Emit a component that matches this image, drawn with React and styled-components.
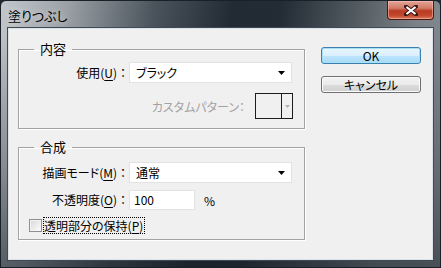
import React from "react";
import styled, { createGlobalStyle } from "styled-components";

const Global = createGlobalStyle`
  html, body { margin: 0; padding: 0; background: #1f2730; }
  body { font-family: "Noto Sans CJK JP", "Noto Sans", sans-serif; }
  * { box-sizing: border-box; }
`;

const Window = styled.div`
  width: 441px;
  height: 268px;
  display: flex;
  flex-direction: column;
  border: 1px solid #1a2027;
  border-radius: 6px 6px 0 0;
  overflow: hidden;
  background:
    linear-gradient(to bottom, rgba(0,0,0,0) 12%, rgba(20,28,36,0.25) 60%, rgba(20,28,36,0.55) 100%),
    linear-gradient(100deg, #c3c7cb 0%, #9aa0a6 14%, #4a535b 32%, #222b34 48%, #232c35 58%, #4e565d 72%, #7b8287 86%, #878d92 100%);
`;

const TitleBar = styled.div`
  height: 27px;
  flex: none;
  display: flex;
  align-items: flex-start;
`;

const Title = styled.div`
  margin: 7px 0 0 7px;
  font-size: 13px;
  line-height: 16px;
  color: #000;
  font-feature-settings: "palt";
  text-shadow: 0 0 6px rgba(255,255,255,0.7);
`;

const CloseButton = styled.div`
  margin-left: auto;
  margin-right: 6px;
  width: 47px;
  height: 19px;
  border: 1px solid #4a1a12;
  border-top: none;
  border-radius: 0 0 4px 4px;
  box-shadow: inset 0 0 0 1px rgba(255,200,190,0.5);
  background: linear-gradient(to bottom, #e3a597 0%, #d27a66 40%, #b93a22 55%, #c2482d 80%, #dd7a5a 100%);
  display: flex;
  align-items: center;
  justify-content: center;
`;

const Client = styled.div`
  flex: 1;
  margin: 0 7px 7px;
  background: #f0f0f0;
  border: 1px solid #dde2e6;
  box-shadow: 0 0 0 1px #3f4a54;
  display: flex;
  align-items: flex-start;
  gap: 16px;
  padding: 12px 0 0 9px;
`;

const LeftColumn = styled.div`
  width: 287px;
  display: flex;
  flex-direction: column;
  gap: 10px;
`;

const Group = styled.fieldset`
  margin: 0;
  min-width: 0;
  border: 1px solid #a2a2a2;
  box-shadow: inset 1px 1px 0 #fff, 1px 1px 0 #fff;
  padding: ${p => p.$pad};
  display: flex;
  flex-direction: column;
  gap: ${p => p.$gap};
`;

const Legend = styled.legend`
  margin-left: 15px;
  padding: 0 6px;
  font-size: 13px;
  line-height: 16px;
  color: #000;
`;

const FieldRow = styled.div`
  display: flex;
  align-items: center;
  height: ${p => p.$h}px;
`;

const Label = styled.div`
  width: 110px;
  flex: none;
  text-align: right;
  font-size: 12px;
  line-height: 16px;
  color: #000;
  font-feature-settings: "palt";
  white-space: nowrap;
`;

const Colon = styled.span`
  display: inline-block;
  width: 12px;
  text-align: center;
  font-feature-settings: normal;
`;

const U = styled.span`
  text-decoration: underline;
  text-underline-offset: 2px;
`;

const Select = styled.div`
  width: 163px;
  height: 21px;
  background: #fff;
  border: 1px solid #e2e2e2;
  display: flex;
  align-items: center;
  padding: 0 6px 0 6px;
  font-size: 12px;
  font-feature-settings: "palt";
  color: #000;
`;

const SelectText = styled.span`
  flex: 1;
`;

const PatternRow = styled.div`
  display: flex;
  align-items: center;
  justify-content: flex-end;
  padding-right: 11px;
  height: 26px;
  gap: 10px;
`;

const DisabledLabel = styled.div`
  font-size: 12px;
  color: #a3a3a3;
  font-feature-settings: "palt";
`;

const PatternBox = styled.div`
  width: 38px;
  height: 26px;
  border: 1px solid #1c1c1c;
  display: flex;
`;

const PatternSwatch = styled.div`
  width: 26px;
  border-right: 1px solid #1c1c1c;
`;

const PatternArrow = styled.div`
  flex: 1;
  display: flex;
  align-items: center;
  justify-content: center;
`;

const TextInput = styled.div`
  width: 66px;
  height: 20px;
  background: #fff;
  border: 1px solid #e2e2e2;
  padding-left: 4px;
  font-size: 12px;
  line-height: 18px;
  color: #000;
`;

const Unit = styled.span`
  margin-left: 9px;
  font-size: 12px;
  color: #000;
`;

const CheckRow = styled.div`
  display: flex;
  align-items: center;
  height: 17px;
  padding-left: 10px;
  gap: 1px;
`;

const CheckBox = styled.div`
  width: 13px;
  height: 13px;
  border: 1px solid #8e8f8f;
  background: linear-gradient(135deg, #d6d6d6 0%, #eeeeee 60%, #ffffff 100%);
  box-shadow: inset 0 0 0 1px #f4f4f4;
`;

const FocusLabel = styled.div`
  border: 1px dotted #000;
  padding: 0 1px 0 0;
  height: 17px;
  font-size: 12px;
  line-height: 15px;
  color: #000;
  font-feature-settings: "palt";
  white-space: nowrap;
`;

const RightColumn = styled.div`
  width: 100px;
  padding-top: 6px;
  display: flex;
  flex-direction: column;
  gap: 12px;
`;

const Button = styled.div`
  height: 17px;
  border-radius: 3px;
  border: 1px solid ${p => (p.$default ? "#3c7fb1" : "#707070")};
  box-shadow: inset 0 0 0 1px ${p => (p.$default ? "#a6e0f7" : "#fbfbfb")};
  background: ${p =>
    p.$default
      ? "linear-gradient(to bottom, #eaf6fd 0%, #d9f0fc 50%, #bee6fd 51%, #a7d9f5 100%)"
      : "linear-gradient(to bottom, #f2f2f2 0%, #ebebeb 50%, #dddddd 51%, #cfcfcf 100%)"};
  display: flex;
  align-items: center;
  justify-content: center;
  font-size: 12px;
  color: #000;
  font-feature-settings: "palt";
`;

const Arrow = ({ color = "#000", w = 7, h = 4 }) => (
  <svg width={w} height={h} viewBox={`0 0 ${w} ${h}`}>
    <polygon points={`0,0 ${w},0 ${w / 2},${h}`} fill={color} />
  </svg>
);

export default function App() {
  return (
    <>
      <Global />
      <Window>
        <TitleBar>
          <Title>塗りつぶし</Title>
          <CloseButton>
            <svg width="14" height="11" viewBox="0 0 14 11">
              <path d="M2 1.5 L12 9.5 M12 1.5 L2 9.5" stroke="#3a1a14" strokeWidth="4" strokeLinecap="square" />
              <path d="M2.5 2 L11.5 9 M11.5 2 L2.5 9" stroke="#fff" strokeWidth="2.2" />
            </svg>
          </CloseButton>
        </TitleBar>
        <Client>
          <LeftColumn>
            <Group $pad="5px 0 9px 0" $gap="10px">
              <Legend>内容</Legend>
              <FieldRow $h={21}>
                <Label>
                  使用(<U>U</U>)<Colon>：</Colon>
                </Label>
                <Select>
                  <SelectText>ブラック</SelectText>
                  <Arrow />
                </Select>
              </FieldRow>
              <PatternRow>
                <DisabledLabel>カスタムパターン：</DisabledLabel>
                <PatternBox>
                  <PatternSwatch />
                  <PatternArrow>
                    <Arrow color="#b0b0b0" w={5} h={3} />
                  </PatternArrow>
                </PatternBox>
              </PatternRow>
            </Group>
            <Group $pad="7px 0 5px 0" $gap="7px">
              <Legend>合成</Legend>
              <FieldRow $h={21}>
                <Label>
                  描画モード(<U>M</U>)<Colon>：</Colon>
                </Label>
                <Select>
                  <SelectText>通常</SelectText>
                  <Arrow />
                </Select>
              </FieldRow>
              <FieldRow $h={20}>
                <Label>
                  不透明度(<U>O</U>)<Colon>：</Colon>
                </Label>
                <TextInput>100</TextInput>
                <Unit>%</Unit>
              </FieldRow>
              <CheckRow>
                <CheckBox />
                <FocusLabel>
                  透明部分の保持(<U>P</U>)
                </FocusLabel>
              </CheckRow>
            </Group>
          </LeftColumn>
          <RightColumn>
            <Button $default>OK</Button>
            <Button>キャンセル</Button>
          </RightColumn>
        </Client>
      </Window>
    </>
  );
}
